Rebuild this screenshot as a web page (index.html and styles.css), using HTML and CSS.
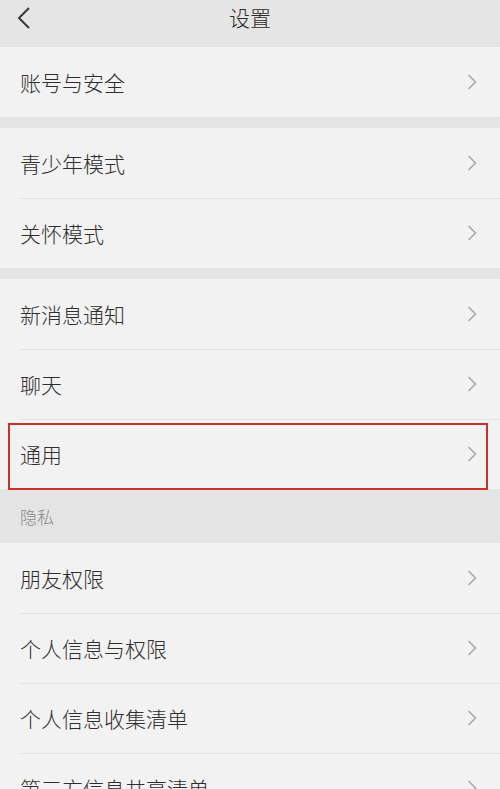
FILE: index.html
```html
<!DOCTYPE html>
<html lang="zh-CN">
<head>
<meta charset="utf-8">
<title>设置</title>
<link rel="stylesheet" href="styles.css">
</head>
<body>
<div class="page">
  <header class="topbar">
    <svg class="back" width="14" height="22" viewBox="0 0 14 22"><path d="M12 1 L2 11 L12 21" fill="none" stroke="#3a3a3a" stroke-width="2"/></svg>
    <div class="title">设置</div>
  </header>

  <section class="group">
    <div class="row"><span class="label">账号与安全</span><svg class="chev" width="10" height="16" viewBox="0 0 10 16"><path d="M1.5 1 L8.5 8 L1.5 15" fill="none" stroke="#a9a9a9" stroke-width="1.6"/></svg></div>
  </section>
  <div class="gap"></div>
  <section class="group">
    <div class="row"><span class="label">青少年模式</span><svg class="chev" width="10" height="16" viewBox="0 0 10 16"><path d="M1.5 1 L8.5 8 L1.5 15" fill="none" stroke="#a9a9a9" stroke-width="1.6"/></svg></div>
    <div class="row"><span class="label">关怀模式</span><svg class="chev" width="10" height="16" viewBox="0 0 10 16"><path d="M1.5 1 L8.5 8 L1.5 15" fill="none" stroke="#a9a9a9" stroke-width="1.6"/></svg></div>
  </section>
  <div class="gap"></div>
  <section class="group">
    <div class="row"><span class="label">新消息通知</span><svg class="chev" width="10" height="16" viewBox="0 0 10 16"><path d="M1.5 1 L8.5 8 L1.5 15" fill="none" stroke="#a9a9a9" stroke-width="1.6"/></svg></div>
    <div class="row"><span class="label">聊天</span><svg class="chev" width="10" height="16" viewBox="0 0 10 16"><path d="M1.5 1 L8.5 8 L1.5 15" fill="none" stroke="#a9a9a9" stroke-width="1.6"/></svg></div>
    <div class="row highlight"><span class="label">通用</span><svg class="chev" width="10" height="16" viewBox="0 0 10 16"><path d="M1.5 1 L8.5 8 L1.5 15" fill="none" stroke="#a9a9a9" stroke-width="1.6"/></svg></div>
  </section>
  <div class="section-title">隐私</div>
  <section class="group">
    <div class="row"><span class="label">朋友权限</span><svg class="chev" width="10" height="16" viewBox="0 0 10 16"><path d="M1.5 1 L8.5 8 L1.5 15" fill="none" stroke="#a9a9a9" stroke-width="1.6"/></svg></div>
    <div class="row"><span class="label">个人信息与权限</span><svg class="chev" width="10" height="16" viewBox="0 0 10 16"><path d="M1.5 1 L8.5 8 L1.5 15" fill="none" stroke="#a9a9a9" stroke-width="1.6"/></svg></div>
    <div class="row"><span class="label">个人信息收集清单</span><svg class="chev" width="10" height="16" viewBox="0 0 10 16"><path d="M1.5 1 L8.5 8 L1.5 15" fill="none" stroke="#a9a9a9" stroke-width="1.6"/></svg></div>
    <div class="row"><span class="label">第三方信息共享清单</span><svg class="chev" width="10" height="16" viewBox="0 0 10 16"><path d="M1.5 1 L8.5 8 L1.5 15" fill="none" stroke="#a9a9a9" stroke-width="1.6"/></svg></div>
  </section>
</div>
</body>
</html>
```
FILE: styles.css
```css
html, body {
  margin: 0;
  padding: 0;
  background: #e4e4e4;
}
body {
  font-family: "Noto Sans CJK SC", "Noto Sans", sans-serif;
  color: #333;
}
.page {
  width: 500px;
  height: 789px;
  overflow: hidden;
  display: flex;
  flex-direction: column;
}
.topbar {
  height: 47px;
  flex: none;
  background: #e5e5e5;
  position: relative;
  display: flex;
  align-items: center;
  justify-content: center;
}
.back {
  position: absolute;
  left: 17px;
  top: 7px;
}
.title {
  font-size: 21px;
  font-weight: 300;
  line-height: 1;
  color: #2a2a2a;
  margin-top: -12px;
}
.group {
  flex: none;
  background: #f2f2f2;
}
.gap {
  flex: none;
  height: 11px;
  background: #e4e4e4;
}
.row {
  height: 70px;
  display: flex;
  align-items: center;
  justify-content: space-between;
  padding: 0 23px 0 20px;
  position: relative;
}
.row + .row::before {
  content: "";
  position: absolute;
  left: 20px;
  right: 0;
  top: 0;
  height: 1px;
  background: #e2e2e2;
}
.label {
  font-size: 21px;
  font-weight: 300;
  line-height: 1;
  color: #2e2e2e;
}
.chev {
  flex: none;
}
.highlight::after {
  content: "";
  position: absolute;
  left: 8px;
  right: 12px;
  top: 4px;
  bottom: -1px;
  border: 2px solid #c8322c;
  z-index: 2;
}
.section-title {
  flex: none;
  height: 54px;
  background: #e4e4e4;
  display: flex;
  align-items: center;
  padding-left: 20px;
  font-size: 17px;
  font-weight: 300;
  color: #8a8a8a;
}
```
